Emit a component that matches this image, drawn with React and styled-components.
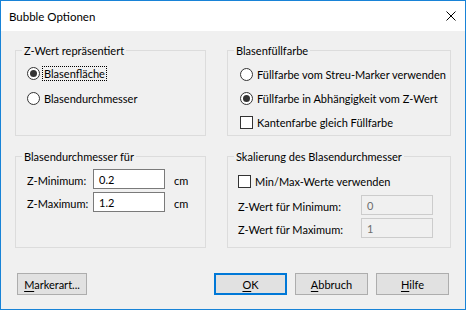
import React from 'react';
import styled, {createGlobalStyle} from 'styled-components';

const GlobalStyle = createGlobalStyle`
    html, body {
        margin: 0;
        padding: 0;
        background: #ffffff;
    }
    body {
        font-family: Lato, 'Noto Sans', sans-serif;
        font-size: 11px;
        color: #000;
        white-space: nowrap;
    }
`;

const Window = styled.div`
    width: 466px;
    height: 310px;
    box-sizing: border-box;
    border: 1px solid #1883d7;
    display: flex;
    flex-direction: column;
    background: #f0f0f0;
`;

const TitleBar = styled.div`
    height: 30px;
    flex: none;
    background: #fff;
    display: flex;
    align-items: center;
    justify-content: space-between;
    padding: 0 9px 0 8px;
`;

const Title = styled.span`
    font-size: 11.5px;
`;

const Content = styled.div`
    flex: 1;
    padding: 19px 14px 0 14px;
    display: flex;
    flex-direction: column;
`;

const Groups = styled.div`
    display: grid;
    grid-template-columns: 191px 224px;
    grid-template-rows: 86px 92px;
    column-gap: 21px;
    row-gap: 20px;
`;

const Group = styled.div`
    position: relative;
    box-sizing: border-box;
    border: 1px solid #dcdcdc;
    padding: ${(p) => p.$pad || '10px 0 0 11px'};
    display: flex;
    flex-direction: column;
`;

const Legend = styled.span`
    position: absolute;
    top: -8px;
    left: 6px;
    padding: 0 2px;
    line-height: 16px;
    background: #f0f0f0;
`;

const OptionRow = styled.label`
    display: flex;
    align-items: center;
    height: ${(p) => p.$h || 25}px;
    gap: 3px;
`;

const Radio = styled.span`
    width: 13px;
    height: 13px;
    box-sizing: border-box;
    border: 1px solid #333;
    border-radius: 50%;
    background: #fff;
    display: flex;
    align-items: center;
    justify-content: center;
    flex: none;

    &::after {
        content: '';
        display: ${(p) => (p.$checked ? 'block' : 'none')};
        width: 7px;
        height: 7px;
        border-radius: 50%;
        background: #333;
    }
`;

const Check = styled.span`
    width: 13px;
    height: 13px;
    box-sizing: border-box;
    border: 1px solid #333;
    background: #fff;
    flex: none;
`;

const OptionText = styled.span`
    padding: 0 1px;
    line-height: 13px;
    outline: ${(p) => (p.$focus ? '1px dotted #000' : 'none')};
`;

const FieldRow = styled.div`
    display: flex;
    align-items: center;
    height: 20px;
    margin-top: ${(p) => p.$mt || 0}px;
    margin-bottom: 3px;
`;

const FieldLabel = styled.span`
    width: ${(p) => p.$w}px;
    flex: none;
    padding-top: 2px;
`;

const Input = styled.div`
    width: 72px;
    height: 20px;
    box-sizing: border-box;
    border: 1px solid ${(p) => (p.$disabled ? '#cccccc' : '#7a7a7a')};
    background: ${(p) => (p.$disabled ? '#f0f0f0' : '#fff')};
    color: ${(p) => (p.$disabled ? '#6d6d6d' : '#000')};
    padding: 0 5px;
    display: flex;
    align-items: center;
    flex: none;
`;

const Unit = styled.span`
    margin-left: 9px;
    padding-top: 2px;
`;

const Footer = styled.div`
    display: flex;
    align-items: center;
    margin-top: 25px;
    padding: 0 2px;
    gap: 8px;
`;

const Spacer = styled.div`
    flex: 1;
`;

const Button = styled.div`
    width: ${(p) => p.$w || 73}px;
    height: 22px;
    box-sizing: border-box;
    border: ${(p) => (p.$default ? '2px solid #0078d7' : '1px solid #adadad')};
    background: #e1e1e1;
    display: flex;
    align-items: center;
    justify-content: center;
    flex: none;

    u {
        text-decoration-thickness: 1px;
        text-underline-offset: 2px;
    }
`;

const CloseIcon = () => (
    <svg width="10" height="10" viewBox="0 0 10 10">
        <path d="M0.5 0.5L9.5 9.5M9.5 0.5L0.5 9.5" stroke="#000" strokeWidth="1" fill="none" />
    </svg>
);

const App = () => (
    <>
        <GlobalStyle />
        <Window>
            <TitleBar>
                <Title>Bubble Optionen</Title>
                <CloseIcon />
            </TitleBar>
            <Content>
                <Groups>
                    <Group>
                        <Legend>Z-Wert repräsentiert</Legend>
                        <OptionRow>
                            <Radio $checked />
                            <OptionText $focus>Blasenfläche</OptionText>
                        </OptionRow>
                        <OptionRow>
                            <Radio />
                            <OptionText>Blasendurchmesser</OptionText>
                        </OptionRow>
                    </Group>
                    <Group $pad="11px 0 0 12px">
                        <Legend>Blasenfüllfarbe</Legend>
                        <OptionRow $h={24}>
                            <Radio />
                            <OptionText>Füllfarbe vom Streu-Marker verwenden</OptionText>
                        </OptionRow>
                        <OptionRow $h={24}>
                            <Radio $checked />
                            <OptionText>Füllfarbe in Abhängigkeit vom Z-Wert</OptionText>
                        </OptionRow>
                        <OptionRow $h={24}>
                            <Check />
                            <OptionText>Kantenfarbe gleich Füllfarbe</OptionText>
                        </OptionRow>
                    </Group>
                    <Group $pad="12px 0 0 11px">
                        <Legend>Blasendurchmesser für</Legend>
                        <FieldRow>
                            <FieldLabel $w={66}>Z-Minimum:</FieldLabel>
                            <Input>0.2</Input>
                            <Unit>cm</Unit>
                        </FieldRow>
                        <FieldRow>
                            <FieldLabel $w={66}>Z-Maximum:</FieldLabel>
                            <Input>1.2</Input>
                            <Unit>cm</Unit>
                        </FieldRow>
                    </Group>
                    <Group $pad="12px 0 0 10px">
                        <Legend>Skalierung des Blasendurchmesser</Legend>
                        <OptionRow $h={24}>
                            <Check />
                            <OptionText>Min/Max-Werte verwenden</OptionText>
                        </OptionRow>
                        <FieldRow $mt={2}>
                            <FieldLabel $w={123}>Z-Wert für Minimum:</FieldLabel>
                            <Input $disabled>0</Input>
                        </FieldRow>
                        <FieldRow>
                            <FieldLabel $w={123}>Z-Wert für Maximum:</FieldLabel>
                            <Input $disabled>1</Input>
                        </FieldRow>
                    </Group>
                </Groups>
                <Footer>
                    <Button $w={70}>
                        <span>
                            <u>M</u>arkerart...
                        </span>
                    </Button>
                    <Spacer />
                    <Button $default>
                        <span>
                            <u>O</u>K
                        </span>
                    </Button>
                    <Button>
                        <span>
                            <u>A</u>bbruch
                        </span>
                    </Button>
                    <Button>
                        <span>
                            <u>H</u>ilfe
                        </span>
                    </Button>
                </Footer>
            </Content>
        </Window>
    </>
);

export default App;
